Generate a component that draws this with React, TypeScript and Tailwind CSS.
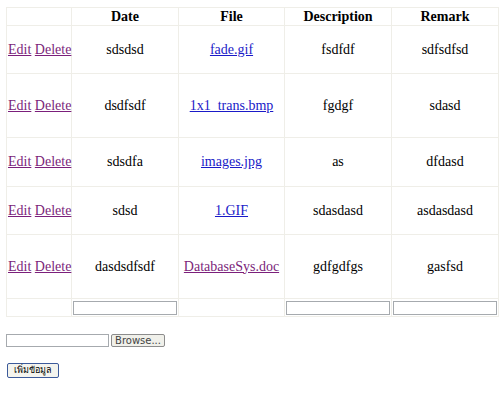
import React from "react";

const rows = [
  { h: "h-[48px]", date: "sdsdsd", file: "fade.gif", visited: false, desc: "fsdfdf", remark: "sdfsdfsd" },
  { h: "h-[64px]", date: "dsdfsdf", file: "1x1_trans.bmp", visited: false, desc: "fgdgf", remark: "sdasd" },
  { h: "h-[49px]", date: "sdsdfa", file: "images.jpg", visited: false, desc: "as", remark: "dfdasd" },
  { h: "h-[48px]", date: "sdsd", file: "1.GIF", visited: false, desc: "sdasdasd", remark: "asdasdasd" },
  { h: "h-[64px]", date: "dasdsdfsdf", file: "DatabaseSys.doc", visited: true, desc: "gdfgdfgs", remark: "gasfsd" },
];

const cell = "border border-[#efeee8] p-0 text-center align-middle";

export default function App() {
  return (
    <div className="w-[500px] h-[394px] bg-white text-black [font-family:'Liberation_Serif',serif] text-[14px] leading-[16px]">
      <div className="pt-[7px] pl-[6px]">
        <table className="w-[492px] table-fixed border-collapse border-b border-b-[#c4c4c4]">
          <colgroup>
            <col className="w-[65px]" />
            <col className="w-[107px]" />
            <col className="w-[106px]" />
            <col className="w-[107px]" />
            <col className="w-[107px]" />
          </colgroup>
          <thead>
            <tr className="h-[18px]">
              <th className={cell}></th>
              <th className={cell + " font-bold"}>Date</th>
              <th className={cell + " font-bold"}>File</th>
              <th className={cell + " font-bold"}>Description</th>
              <th className={cell + " font-bold"}>Remark</th>
            </tr>
          </thead>
          <tbody>
            {rows.map((r, i) => (
              <tr key={i} className={r.h}>
                <td className={cell + " text-left pl-px whitespace-nowrap"}>
                  <a href="#" className="text-[#7b1f7b] underline">Edit</a>{" "}
                  <a href="#" className="text-[#7b1f7b] underline">Delete</a>
                </td>
                <td className={cell}>{r.date}</td>
                <td className={cell}>
                  <a href="#" className={(r.visited ? "text-[#7b1f7b]" : "text-[#1a1ac8]") + " underline"}>{r.file}</a>
                </td>
                <td className={cell}>{r.desc}</td>
                <td className={cell}>{r.remark}</td>
              </tr>
            ))}
            <tr className="h-[18px]">
              <td className={cell}></td>
              <td className={cell}>
                <input className="block mx-auto w-[104px] h-[14px] border border-[#a6aaae] bg-white" />
              </td>
              <td className={cell}></td>
              <td className={cell}>
                <input className="block mx-auto w-[104px] h-[14px] border border-[#a6aaae] bg-white" />
              </td>
              <td className={cell}>
                <input className="block mx-auto w-[104px] h-[14px] border border-[#a6aaae] bg-white" />
              </td>
            </tr>
          </tbody>
        </table>
      </div>
      <div className="pl-[6px] mt-[17px] flex items-center gap-[2px]">
        <div className="w-[103px] h-[13px] border border-[#a6aaae] bg-white"></div>
        <button className="w-[54px] h-[13px] border border-[#8c8c8c] rounded-[2px] bg-[#f0f0ea] text-[10px] leading-[11px] text-[#444] [font-family:'DejaVu_Sans','Liberation_Sans',sans-serif]">
          Browse...
        </button>
      </div>
      <div className="pl-[7px] mt-[14px]">
        <button className="w-[52px] h-[15px] border border-[#3c5a9a] rounded-[2px] bg-[#f4f4ee] text-[9px] leading-[12px] text-black [font-family:'Noto_Sans','DejaVu_Sans',sans-serif]">
          เพิ่มข้อมูล
        </button>
      </div>
    </div>
  );
}
